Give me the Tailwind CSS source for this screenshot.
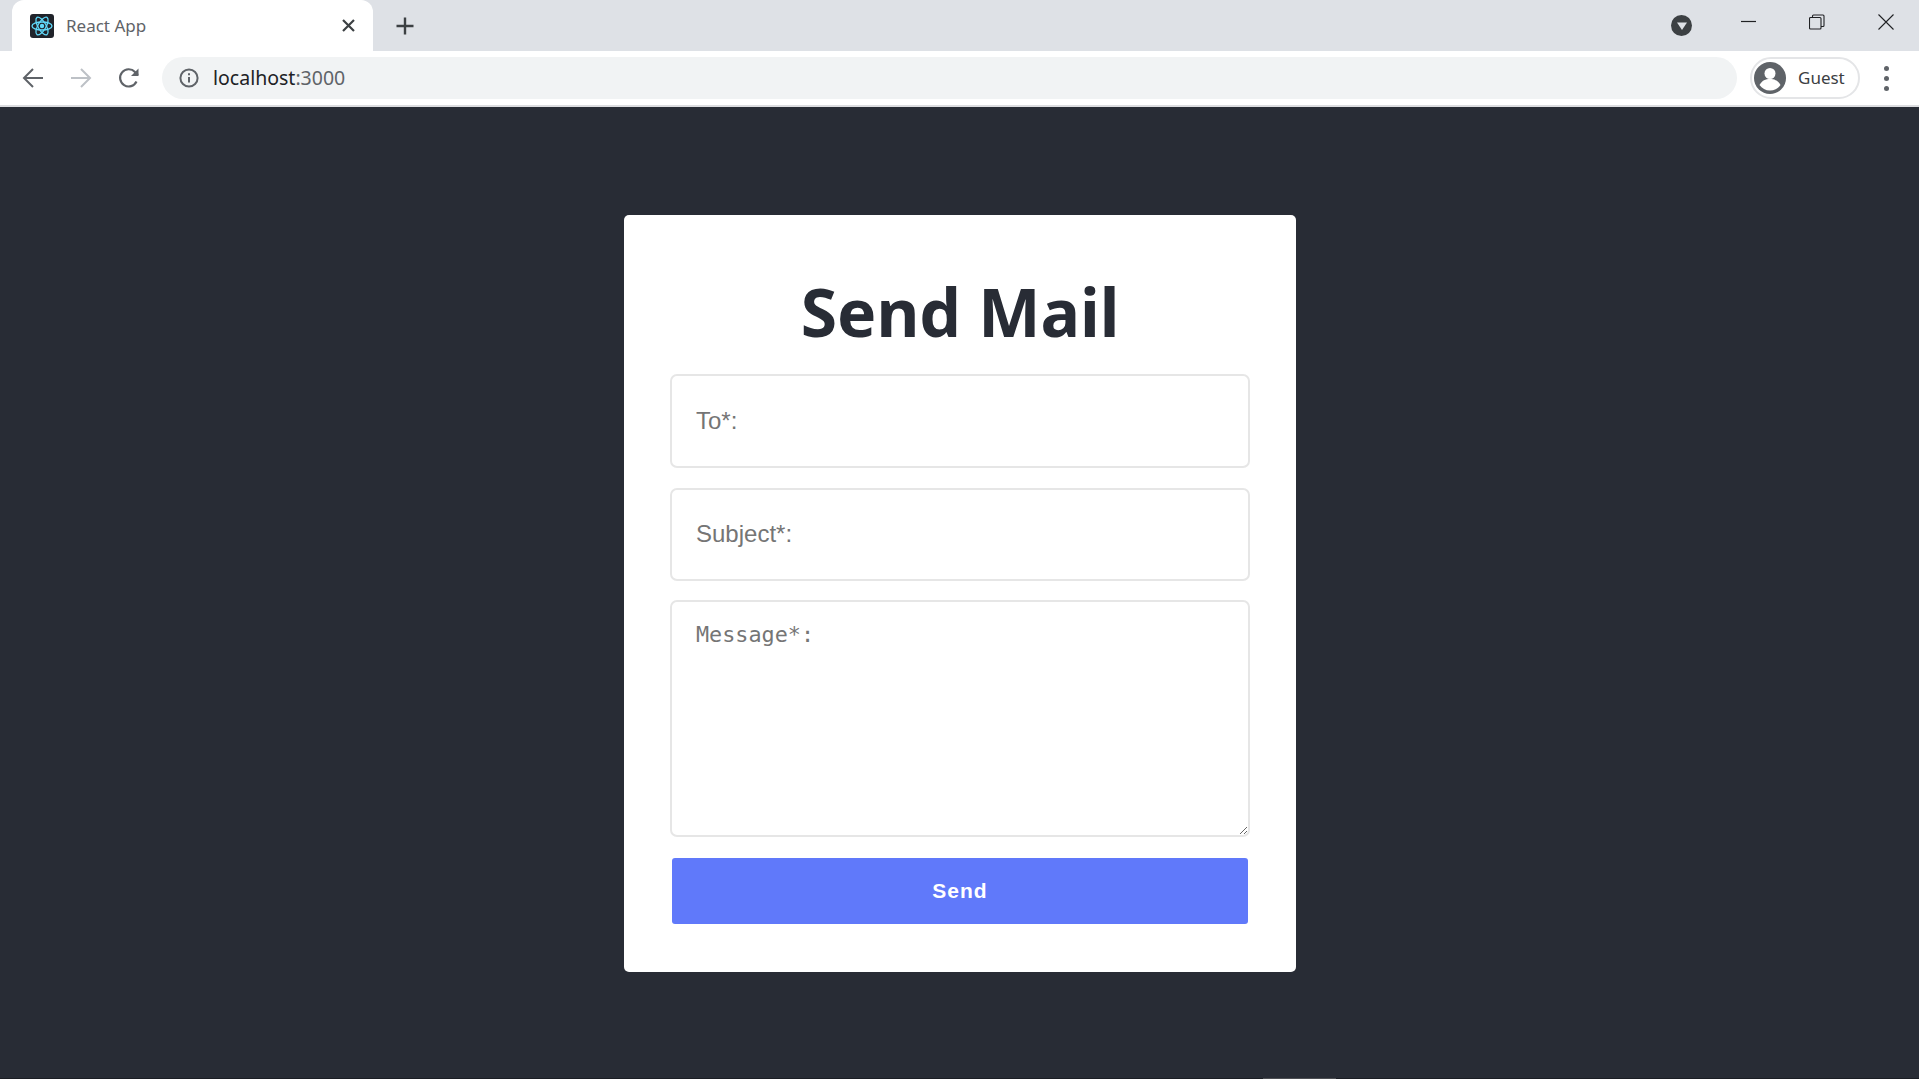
<!DOCTYPE html>
<html lang="en">
<head>
    <meta charset="UTF-8">
    <title>React App</title>
    <script src="https://cdn.jsdelivr.net/npm/@tailwindcss/browser@4"></script>
</head>
<body class="flex h-[1079px] w-[1919px] flex-col overflow-hidden bg-[#282c35] font-['Noto_Sans',sans-serif]">
    <!-- Tab strip -->
    <div class="flex h-[51px] items-end bg-[#dee1e6] pl-3">
        <div class="relative flex h-[51px] w-[361px] items-center rounded-t-[12px] bg-white pl-[18px]">
            <svg class="h-6 w-6" viewBox="0 0 24 24">
                <rect width="24" height="24" rx="3" fill="#20232a"/>
                <g fill="none" stroke="#61dafb" stroke-width="1.3">
                    <ellipse cx="12" cy="12" rx="10" ry="4"/>
                    <ellipse cx="12" cy="12" rx="10" ry="4" transform="rotate(60 12 12)"/>
                    <ellipse cx="12" cy="12" rx="10" ry="4" transform="rotate(120 12 12)"/>
                </g>
                <circle cx="12" cy="12" r="2.2" fill="#61dafb"/>
            </svg>
            <span class="ml-3 text-[17px] text-[#5f6368]">React App</span>
            <svg class="absolute left-[330px] top-[19px] h-[13px] w-[13px]" viewBox="0 0 13 13" fill="none" stroke="#3c4043" stroke-width="2.2"><path d="M1 1l11 11M12 1L1 12"/></svg>
        </div>
        <svg class="mb-[15px] ml-[22px] h-[20px] w-[20px]" viewBox="0 0 20 20" fill="none" stroke="#3c4043" stroke-width="2.4"><path d="M10 1.5v17M1.500 10h17"/></svg>
        <div class="ml-auto flex h-[51px] items-start">
            <div class="mr-[49px] mt-[15px] flex h-[21px] w-[21px] items-center justify-center rounded-full bg-[#3c4043]">
                <svg class="h-[10px] w-[10px]" viewBox="0 0 10 10"><path d="M0 1.500h10L5 9z" fill="#dee1e6"/></svg>
            </div>
            <svg class="mr-[52px] mt-[14px] h-[16px] w-[16px]" viewBox="0 0 16 16" fill="none" stroke="#202124" stroke-width="1.2"><path d="M0 7.500h15"/></svg>
            <svg class="mr-[53px] mt-[14px] h-[16px] w-[16px]" viewBox="0 0 16 16" fill="none" stroke="#202124" stroke-width="1.1"><rect x="0.5" y="3.500" width="11.500" height="11.500" rx="1"/><path d="M3.500 3.500V2a1 1 0 0 1 1-1H14a1 1 0 0 1 1 1v9.500a1 1 0 0 1-1 1h-2"/></svg>
            <svg class="mr-[25px] mt-[14px] h-[16px] w-[16px]" viewBox="0 0 16 16" fill="none" stroke="#202124" stroke-width="1.1"><path d="M.5.5l15 15M15.500.5l-15 15"/></svg>
        </div>
    </div>

    <!-- Toolbar -->
    <div class="flex h-[56px] items-center border-b-2 border-[#dcdde0] bg-white">
        <svg class="ml-[22px] h-[22px] w-[22px]" viewBox="0 0 22 22" fill="none" stroke="#5f6368" stroke-width="2"><path d="M21 11H2M11 2l-9 9 9 9"/></svg>
        <svg class="ml-[26px] h-[22px] w-[22px]" viewBox="0 0 22 22" fill="none" stroke="#bdc1c6" stroke-width="2"><path d="M1 11h19M11 2l9 9-9 9"/></svg>
        <svg class="ml-[26px] h-[22px] w-[22px]" viewBox="0 0 22 22" fill="none" stroke="#5f6368" stroke-width="2.2"><path d="M18.500 14.500A8.600 8.600 0 1 1 17 5l3 3"/><path d="M20.500 1.500V9H13z" fill="#5f6368" stroke="none"/></svg>
        <div class="ml-[22px] flex h-[42px] w-[1575px] items-center rounded-full bg-[#f1f3f4] pl-[17px]">
            <svg class="h-[20px] w-[20px]" viewBox="0 0 20 20" fill="none" stroke="#5f6368" stroke-width="2"><circle cx="10" cy="10" r="8.600"/><path d="M10 9v5.500M10 5.200v2"/></svg>
            <span class="ml-[14px] text-[19.5px] text-[#202124]">localhost<span class="text-[#5f6368]">:3000</span></span>
        </div>
        <div class="ml-[13px] flex h-[42px] w-[110px] items-center rounded-full border-2 border-[#e4e5e7] pl-[2px]">
            <svg class="h-8 w-8" viewBox="0 0 32 32">
                <circle cx="16" cy="16" r="16" fill="#5f6368"/>
                <circle cx="16" cy="11.500" r="5.500" fill="#fff"/>
                <path d="M5.500 23c2.500-4.500 6-6 10.500-6s8 1.500 10.500 6c-2.500 3.500-6 5.500-10.500 5.500S8 26.500 5.500 23z" fill="#fff"/>
            </svg>
            <span class="ml-[12px] text-[17px] text-[#3c4043]">Guest</span>
        </div>
        <div class="ml-[24px] flex flex-col gap-[5px]">
            <span class="h-[5px] w-[5px] rounded-full bg-[#5f6368]"></span>
            <span class="h-[5px] w-[5px] rounded-full bg-[#5f6368]"></span>
            <span class="h-[5px] w-[5px] rounded-full bg-[#5f6368]"></span>
        </div>
    </div>

    <!-- Mail form -->
    <div class="ml-[624px] mt-[108px] h-[757px] w-[672px] rounded-[5px] bg-white px-[46px] pt-[52px]">
        <h1 class="mb-[16px] h-[91px] text-center text-[66px] leading-[89px] font-bold text-[#282c35]">Send Mail</h1>
        <form class="flex flex-col">
            <input type="text" placeholder="To*:" class="h-[94px] w-full rounded-[7px] border-2 border-[#e6e6e6] pl-[24px] font-['Liberation_Sans',sans-serif] text-[24px] placeholder:text-[#757575]">
            <input type="text" placeholder="Subject*:" class="mt-[20px] h-[93px] w-full rounded-[7px] border-2 border-[#e6e6e6] pb-[2px] pl-[24px] font-['Liberation_Sans',sans-serif] text-[24px] placeholder:text-[#757575]">
            <textarea placeholder="Message*:" class="mt-[19px] block h-[237px] w-full rounded-[7px] border-2 border-[#e6e6e6] pl-[24px] pt-[17px] font-['DejaVu_Sans_Mono',monospace] text-[21.8px] placeholder:text-[#757575]"></textarea>
            <button type="button" class="mx-[2px] mt-[21px] h-[66px] rounded-[3px] bg-[#6079fa] font-['Liberation_Sans',sans-serif] text-[21px] font-bold tracking-[1px] text-white">Send</button>
        </form>
    </div>

    <!-- Bottom edge of the capture -->
    <div class="mt-auto flex h-[1px] bg-[#1b1e24]">
        <div class="ml-[1263px] w-[73px] bg-[#4d4f53]"></div>
    </div>
</body>
</html>
